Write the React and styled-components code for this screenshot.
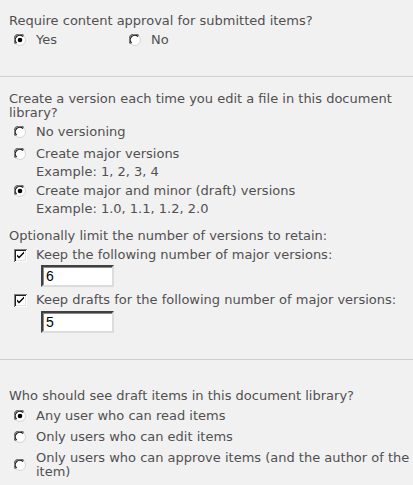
import React from "react";
import styled, { createGlobalStyle } from "styled-components";

const GlobalStyle = createGlobalStyle`
  html, body {
    margin: 0;
    padding: 0;
    background: #f2f1f2;
  }
  body {
    font-family: "DejaVu Sans", Verdana, sans-serif;
    font-size: 13px;
    line-height: 14px;
    color: #505050;
  }
`;

const Page = styled.div`
  width: 413px;
  min-height: 485px;
  background: #f2f1f2;
`;

const Section = styled.div`
  padding: ${({ $top }) => $top}px ${({ $right }) => $right ?? 4}px
    ${({ $bottom }) => $bottom}px 9px;
`;

const Divider = styled.div`
  height: 1px;
  background: #d0cfd0;
`;

const Question = styled.div`
  margin-top: ${({ $mt }) => $mt || 0}px;
`;

const OptionList = styled.div`
  display: flex;
  flex-direction: column;
  gap: ${({ $gap }) => $gap || 0}px;
  padding-left: 5px;
  margin-top: ${({ $mt }) => $mt || 5}px;
`;

const InlineOptions = styled.div`
  display: flex;
  padding-left: 5px;
  margin-top: 5px;
`;

const Option = styled.label`
  display: flex;
  align-items: center;
  width: ${({ $width }) => ($width ? `${$width}px` : "auto")};
  margin-top: ${({ $mt }) => $mt || 0}px;
`;

const Mark = styled.span`
  flex: 0 0 22px;
  display: flex;
  align-items: center;
`;

const Hint = styled.div`
  padding-left: 22px;
  margin-top: 4px;
`;

const NumberBox = styled.div`
  margin: ${({ $mt }) => $mt}px 0 0 27px;
  width: 66px;
  height: 18px;
  background: #fff;
  border-top: 2px solid #404040;
  border-left: 2px solid #404040;
  border-right: 2px solid #dcdcdc;
  border-bottom: 2px solid #dcdcdc;
  box-shadow: inset 1px 1px 0 #8a8a8a;
  font-family: "Liberation Sans", Arial, sans-serif;
  font-size: 14px;
  line-height: 18px;
  color: #000;
  padding-left: 3px;
  box-sizing: content-box;
`;

const Radio = ({ checked }) => (
  <svg width="12" height="12" viewBox="0 0 12 12">
    <circle cx="6" cy="6" r="5.5" fill="#ffffff" stroke="#d6d4d0" strokeWidth="1" />
    <path d="M1.6 9.8 A5.3 5.3 0 0 1 9.8 1.6" fill="none" stroke="#6a6a6a" strokeWidth="1.2" />
    <path d="M2.6 9 A4.3 4.3 0 0 1 9 2.6" fill="none" stroke="#1a1a1a" strokeWidth="1.2" />
    {checked && <circle cx="6" cy="6" r="2.3" fill="#000" />}
  </svg>
);

const Check = () => (
  <svg width="13" height="13" viewBox="0 0 13 13">
    <rect x="0" y="0" width="13" height="13" fill="#7f7f7f" />
    <rect x="1" y="1" width="12" height="12" fill="#ffffff" />
    <rect x="1" y="1" width="11" height="11" fill="#202020" />
    <rect x="2" y="2" width="10" height="10" fill="#e4e2de" />
    <rect x="2" y="2" width="9" height="9" fill="#ffffff" />
    <path d="M3 5.5 L5 7.5 L10 2.5 L10 4.5 L5 9.5 L3 7.5 Z" fill="#000" />
  </svg>
);

const RadioOption = ({ checked, children, width, mt }) => (
  <Option $width={width} $mt={mt}>
    <Mark>
      <Radio checked={checked} />
    </Mark>
    <span>{children}</span>
  </Option>
);

const CheckOption = ({ children, mt }) => (
  <Option $mt={mt}>
    <Mark>
      <Check />
    </Mark>
    <span>{children}</span>
  </Option>
);

export default function App() {
  return (
    <Page>
      <GlobalStyle />
      <Section $top={14} $bottom={29}>
        <Question>Require content approval for submitted items?</Question>
        <InlineOptions>
          <RadioOption checked width={115}>Yes</RadioOption>
          <RadioOption>No</RadioOption>
        </InlineOptions>
      </Section>
      <Divider />
      <Section $top={15} $bottom={26}>
        <Question>
          Create a version each time you edit a file in this document library?
        </Question>
        <OptionList>
          <RadioOption>No versioning</RadioOption>
          <RadioOption mt={8}>Create major versions</RadioOption>
          <Hint>Example: 1, 2, 3, 4</Hint>
          <RadioOption checked mt={5}>
            Create major and minor (draft) versions
          </RadioOption>
          <Hint>Example: 1.0, 1.1, 1.2, 2.0</Hint>
        </OptionList>
        <Question $mt={13}>
          Optionally limit the number of versions to retain:
        </Question>
        <OptionList>
          <CheckOption>Keep the following number of major versions:</CheckOption>
          <NumberBox $mt={3}>6</NumberBox>
          <CheckOption mt={6}>
            Keep drafts for the following number of major versions:
          </CheckOption>
          <NumberBox $mt={4}>5</NumberBox>
        </OptionList>
      </Section>
      <Divider />
      <Section $top={29} $bottom={6} $right={0}>
        <Question>Who should see draft items in this document library?</Question>
        <OptionList $gap={7} $mt={6}>
          <RadioOption checked>Any user who can read items</RadioOption>
          <RadioOption>Only users who can edit items</RadioOption>
          <RadioOption>
            Only users who can approve items (and the author of the item)
          </RadioOption>
        </OptionList>
      </Section>
    </Page>
  );
}
